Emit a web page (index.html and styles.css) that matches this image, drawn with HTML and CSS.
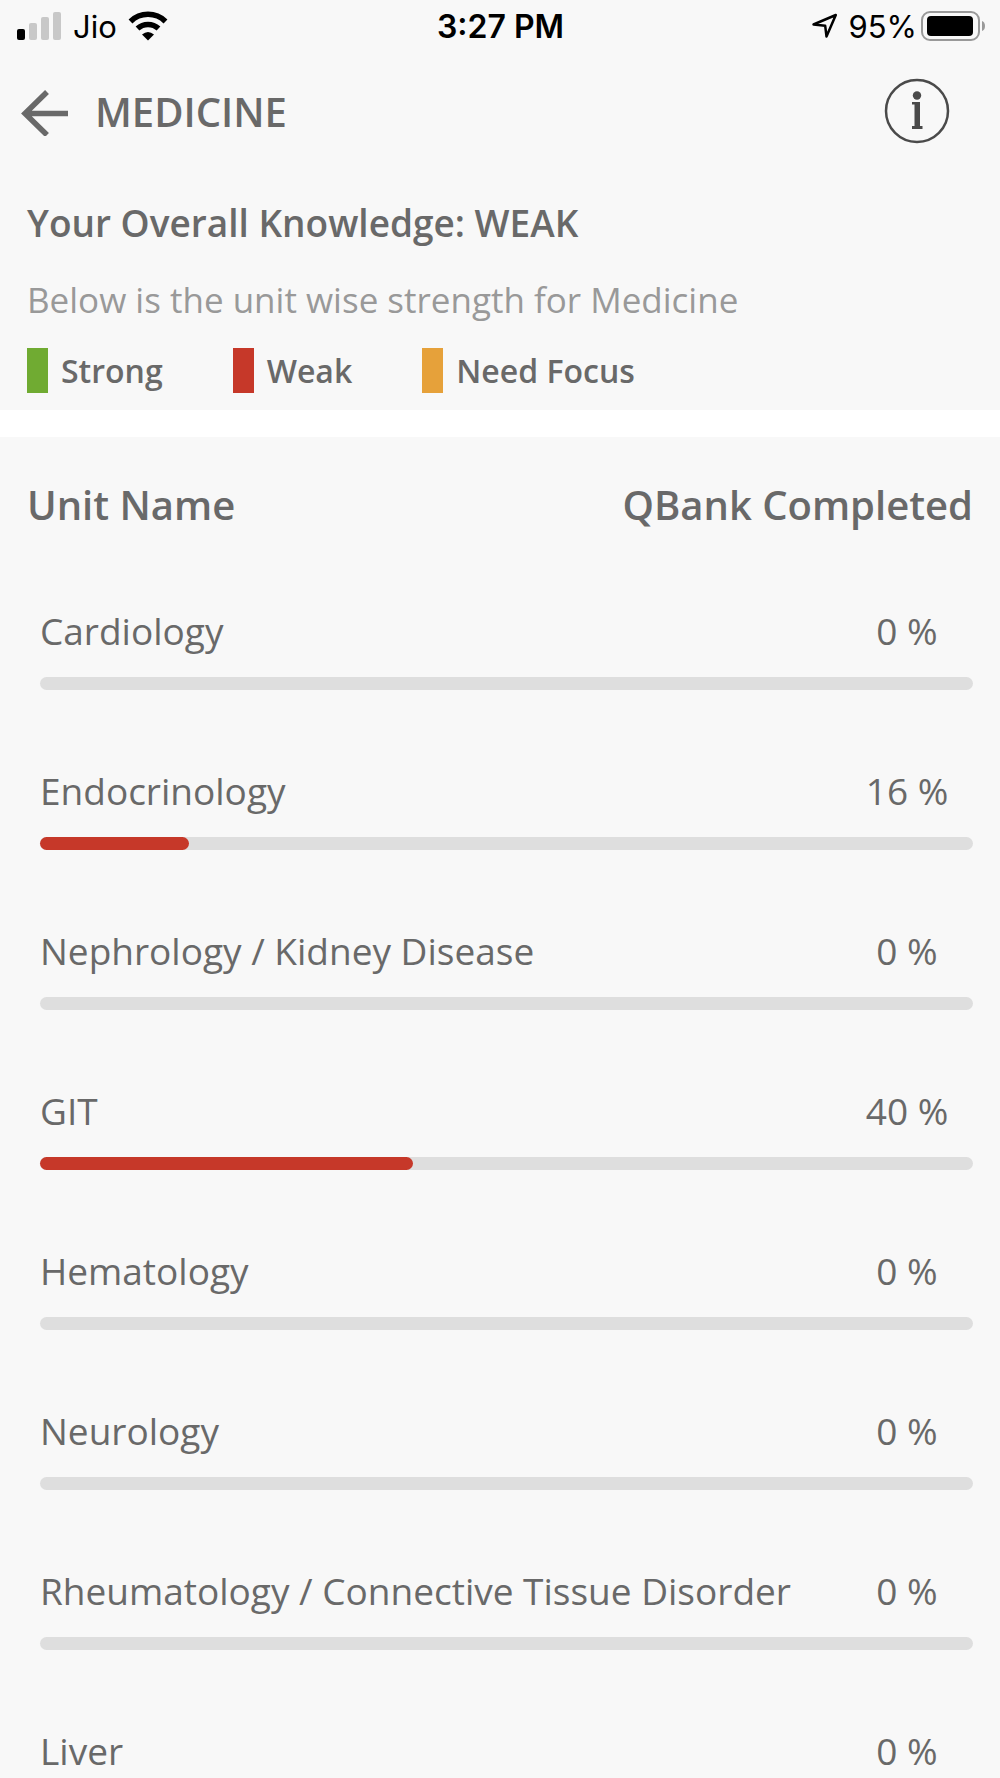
FILE: index.html
```
<!DOCTYPE html>
<html lang="en">
<head>
    <meta charset="UTF-8">
    <meta name="viewport" content="width=device-width, initial-scale=1.0">
    <title>Medicine</title>
    <link rel="stylesheet" href="styles.css">
</head>
<body>
    <!-- Status Bar -->
    <div class="status-bar">
        <div class="status-left">
            <svg class="signal" width="46" height="30" viewBox="0 0 46 30">
                <rect x="1" y="18" width="8" height="11" rx="2" fill="#000"/>
                <rect x="13" y="12" width="8" height="17" rx="2" fill="#c8c8c8"/>
                <rect x="25" y="6" width="8" height="23" rx="2" fill="#c8c8c8"/>
                <rect x="37" y="1" width="8" height="28" rx="2" fill="#c8c8c8"/>
            </svg>
            <span>Jio</span>
            <svg class="wifi" width="40" height="30" viewBox="0 0 40 30">
                <path d="M2.500 10.500A25 25 0 0 1 37.500 10.500" fill="none" stroke="#000" stroke-width="5.500"/>
                <path d="M9.500 17.500A15.500 15.500 0 0 1 30.500 17.500" fill="none" stroke="#000" stroke-width="5.500"/>
                <path d="M14 23.500Q20 18.500 26 23.500L20 29.500Z" fill="#000"/>
            </svg>
        </div>
        <div class="status-time">3:27 PM</div>
        <div class="status-right">
            <svg class="location" width="26" height="26" viewBox="0 0 26 26">
                <path d="M1.500 11.500L23.800 2L14.500 23.500L13.200 12.800Z" fill="none" stroke="#000" stroke-width="2.500" stroke-linejoin="round"/>
            </svg>
            <span>95%</span>
            <svg class="battery" width="66" height="32" viewBox="0 0 66 32">
                <rect x="3" y="2" width="57" height="28" rx="8" fill="none" stroke="#999" stroke-width="2"/>
                <rect x="8" y="6" width="46" height="20" rx="4" fill="#000"/>
                <path d="M63 11Q66 12 66 16T63 21Z" fill="#999"/>
            </svg>
        </div>
    </div>

    <!-- Header -->
    <div class="header">
        <button class="icon-btn" type="button" aria-label="Back">
            <svg width="48" height="48" viewBox="0 0 48 48">
                <path d="M26 4L4 25.500L26 47M4 25.500H47" fill="none" stroke="#696969" stroke-width="5.500"/>
            </svg>
        </button>
        <h1>MEDICINE</h1>
        <button class="icon-btn info-btn" type="button" aria-label="Info">
            <svg width="66" height="66" viewBox="0 0 66 66">
                <circle cx="33" cy="33" r="31" fill="none" stroke="#4a4a4a" stroke-width="2.500"/>
                <circle cx="33" cy="17.500" r="4.200" fill="#4a4a4a"/>
                <path d="M28 24H36V48H38.500V51H28V48H30.500V26.500H28Z" fill="#4a4a4a"/>
            </svg>
        </button>
    </div>

    <!-- Summary -->
    <div class="summary">
        <h2>Your Overall Knowledge: WEAK</h2>
        <p>Below is the unit wise strength for Medicine</p>
        <ul class="legend">
            <li><span class="swatch strong"></span>Strong</li>
            <li><span class="swatch weak"></span>Weak</li>
            <li><span class="swatch focus"></span>Need Focus</li>
        </ul>
    </div>

    <!-- Unit List -->
    <div class="units">
        <table>
            <thead>
                <tr>
                    <th scope="col">Unit Name</th>
                    <th scope="col">QBank Completed</th>
                </tr>
            </thead>
            <tbody>
                <tr>
                    <td>Cardiology</td>
                    <td class="percent">0 %</td>
                    <td class="track"></td>
                </tr>
                <tr>
                    <td>Endocrinology</td>
                    <td class="percent">16 %</td>
                    <td class="track"><div class="fill weak" style="width: 16%"></div></td>
                </tr>
                <tr>
                    <td>Nephrology / Kidney Disease</td>
                    <td class="percent">0 %</td>
                    <td class="track"></td>
                </tr>
                <tr>
                    <td>GIT</td>
                    <td class="percent">40 %</td>
                    <td class="track"><div class="fill weak" style="width: 40%"></div></td>
                </tr>
                <tr>
                    <td>Hematology</td>
                    <td class="percent">0 %</td>
                    <td class="track"></td>
                </tr>
                <tr>
                    <td>Neurology</td>
                    <td class="percent">0 %</td>
                    <td class="track"></td>
                </tr>
                <tr>
                    <td>Rheumatology / Connective Tissue Disorder</td>
                    <td class="percent">0 %</td>
                    <td class="track"></td>
                </tr>
                <tr>
                    <td>Liver</td>
                    <td class="percent">0 %</td>
                    <td class="track"></td>
                </tr>
            </tbody>
        </table>
    </div>
</body>
</html>
```
FILE: styles.css
```
* {
    box-sizing: border-box;
}
body {
    font-family: "Open Sans", sans-serif;
    margin: 0;
    height: 100vh;
    background-color: #f8f8f8;
    color: #696969;
    display: flex;
    flex-direction: column;
}
h1, h2, p, ul {
    margin: 0;
    padding: 0;
}
/* Status bar styles */
.status-bar {
    display: grid;
    grid-template-columns: 1fr auto 1fr;
    align-items: center;
    height: 52px;
    padding: 0 15px 0 16px;
    font-family: Inter, sans-serif;
    font-size: 31px;
    color: #000;
    flex-shrink: 0;
}
.status-left, .status-right {
    display: flex;
    align-items: center;
}
.status-left {
    gap: 11px;
}
.status-right {
    justify-content: flex-end;
    gap: 10px;
}
.battery {
    margin-left: -8px;
}
.status-time {
    font-size: 32px;
    font-weight: 600;
}
/* Header styles */
.header {
    display: flex;
    align-items: center;
    height: 120px;
    padding: 0 50px 0 21px;
    flex-shrink: 0;
}
.header h1 {
    flex: 1;
    margin-left: 26px;
    font-size: 40px;
    font-weight: 600;
    line-height: 56px;
}
.icon-btn {
    display: flex;
    padding: 0;
    border: none;
    background: none;
    cursor: pointer;
}
.info-btn {
    padding-bottom: 2px;
}
/* Summary and legend */
.summary {
    padding: 23px 27px 17px;
    flex-shrink: 0;
}
.summary h2 {
    font-size: 37px;
    font-weight: 600;
    line-height: 56px;
}
.summary p {
    margin-top: 21px;
    font-size: 35px;
    line-height: 56px;
    color: #999;
}
.legend {
    display: flex;
    gap: 70px;
    margin-top: 19px;
    list-style: none;
    font-size: 32px;
    font-weight: 600;
}
.legend li {
    display: flex;
    align-items: center;
    gap: 13px;
    height: 46px;
}
.swatch {
    width: 21px;
    height: 45px;
}
.strong {
    background-color: #70ab32;
}
.weak {
    background-color: #c63829;
}
.focus {
    background-color: #e6a13a;
}
/* Unit list styles */
.units {
    flex: 1;
    min-height: 0;
    padding: 40px 27px 0;
    border-top: 27px solid #fff;
    overflow-y: auto;
    scrollbar-width: none;
}
table, thead, tbody {
    display: block;
}
th, td {
    padding: 0;
}
thead tr {
    display: flex;
    justify-content: space-between;
    font-size: 40px;
    line-height: 56px;
}
th {
    font-weight: 600;
}
tbody {
    padding: 70px 0 0 13px;
}
tbody tr {
    display: flex;
    flex-wrap: wrap;
    justify-content: space-between;
    margin-bottom: 73px;
    font-size: 37px;
    line-height: 56px;
}
.percent {
    width: 132px;
    text-align: center;
}
.track {
    width: 100%;
    height: 13px;
    margin-top: 18px;
    border-radius: 7px;
    background-color: #dedede;
}
.fill {
    height: 13px;
    border-radius: 7px;
}
```
